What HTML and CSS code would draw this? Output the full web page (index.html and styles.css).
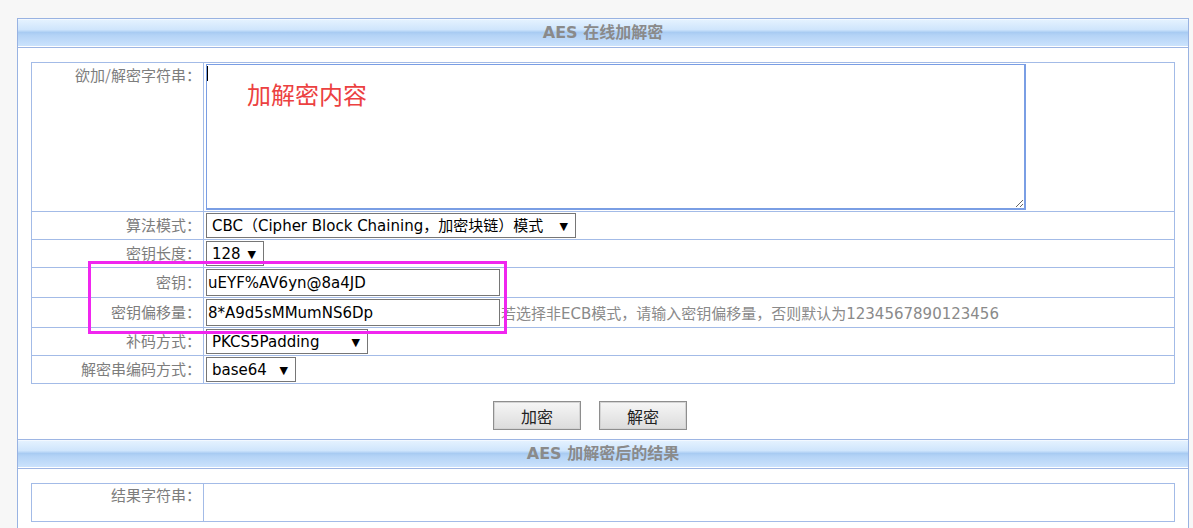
FILE: index.html
```html
<!DOCTYPE html>
<html lang="zh-CN">
<head>
    <meta charset="UTF-8">
    <title>AES 在线加解密</title>
    <link rel="stylesheet" href="styles.css">
</head>
<body>
    <div class="panel">
        <div class="panel-head">AES 在线加解密</div>
        <div class="panel-body">
            <table class="form-table">
                <tr class="row-text">
                    <th>欲加/解密字符串：</th>
                    <td>
                        <div class="text-wrap">
                            <textarea class="src-text"></textarea>
                            <span class="caret"></span>
                            <span class="note">加解密内容</span>
                        </div>
                    </td>
                </tr>
                <tr>
                    <th>算法模式：</th>
                    <td><div class="field"><span class="select-wrap"><select class="sel sel-mode"><option>CBC（Cipher Block Chaining，加密块链）模式</option></select></span></div></td>
                </tr>
                <tr>
                    <th>密钥长度：</th>
                    <td><div class="field"><span class="select-wrap"><select class="sel sel-len"><option>128</option></select></span></div></td>
                </tr>
                <tr>
                    <th>密钥：</th>
                    <td><div class="field"><input class="txt" type="text" value="uEYF%AV6yn@8a4JD"></div></td>
                </tr>
                <tr>
                    <th>密钥偏移量：</th>
                    <td><div class="field"><input class="txt" type="text" value="8*A9d5sMMumNS6Dp"><span class="hint">若选择非ECB模式，请输入密钥偏移量，否则默认为1234567890123456</span></div></td>
                </tr>
                <tr>
                    <th>补码方式：</th>
                    <td><div class="field"><span class="select-wrap"><select class="sel sel-pad"><option>PKCS5Padding</option></select></span></div></td>
                </tr>
                <tr>
                    <th>解密串编码方式：</th>
                    <td><div class="field"><span class="select-wrap"><select class="sel sel-enc"><option>base64</option></select></span></div></td>
                </tr>
            </table>
            <div class="actions">
                <button class="btn">加密</button>
                <button class="btn">解密</button>
            </div>
        </div>
        <div class="panel-head result-head">AES 加解密后的结果</div>
        <div class="panel-body">
            <table class="form-table">
                <tr class="row-result">
                    <th>结果字符串：</th>
                    <td></td>
                </tr>
            </table>
        </div>

        <!-- 标注框 -->
        <div class="highlight"></div>
    </div>
</body>
</html>
```
FILE: styles.css
```css
* {
    margin: 0;
    padding: 0;
    box-sizing: border-box;
}

body {
    background: #f7f7f7;
    font-family: "DejaVu Sans", "Noto Sans CJK SC", sans-serif;
    font-size: 15px;
    color: #000;
    text-spacing-trim: space-all;
}

.panel {
    position: relative;
    width: 1172px;
    margin: 18px 0 0 17px;
    background: #fff;
    border: 1px solid #99b3e2;
    padding-bottom: 40px;
}

.panel-head {
    height: 29px;
    line-height: 28px;
    text-align: center;
    font-size: 16px;
    font-weight: bold;
    color: #8a8a8a;
    background: linear-gradient(to bottom, #e6f3ff 0%, #cfe5fc 38%, #a8cbf2 48%, #b4d3f6 58%, #cde4fd 100%);
    border-bottom: 1px solid #9db5e3;
    box-shadow: inset 0 -1px 0 #fff, inset 0 1px 0 #f2f8ff;
}

.result-head {
    height: 30px;
    border-top: 1px solid #9db5e3;
}

.panel-body {
    padding: 14px 13px 0;
}

.form-table {
    width: 100%;
    border-collapse: collapse;
}

.form-table th,
.form-table td {
    border: 1px solid #a3bbe7;
    padding: 1px 2px;
}

.form-table th {
    width: 172px;
    text-align: right;
    vertical-align: middle;
    font-family: "Noto Sans CJK JP", "Noto Sans CJK SC", sans-serif;
    font-weight: normal;
    font-size: 15px;
    color: #7d7d7d;
    padding: 0 2px 3px 2px;
}

.row-text th {
    vertical-align: top;
    padding-top: 1px;
}

.row-result th {
    vertical-align: top;
    padding-top: 0;
}

.row-result td {
    height: 38px;
}

.field {
    display: flex;
    align-items: center;
}

.text-wrap {
    position: relative;
}

.src-text {
    display: block;
    width: 820px;
    height: 146px;
    border: 1px solid #7a9ee4;
    border-right-width: 2px;
    border-bottom-width: 2px;
    font-family: inherit;
    font-size: 15px;
    outline: none;
}

.caret {
    position: absolute;
    left: 1px;
    top: 2px;
    width: 1px;
    height: 15px;
    background: #000;
}

.note {
    position: absolute;
    left: 41px;
    top: 17px;
    font-family: "Noto Sans CJK SC", sans-serif;
    font-size: 24px;
    line-height: 26px;
    color: #ec4141;
}

.select-wrap {
    position: relative;
    display: inline-block;
}

.select-wrap::after {
    content: "▼";
    position: absolute;
    right: 8px;
    top: 50%;
    transform: translateY(-50%);
    font-size: 11px;
    color: #000;
    pointer-events: none;
}

.sel {
    display: block;
    appearance: none;
    -webkit-appearance: none;
    height: 25px;
    border: 1px solid #767676;
    border-radius: 0;
    background: #fff;
    padding: 0 0 0 5px;
    font-family: inherit;
    font-size: 15px;
    color: #000;
}

.sel-mode { width: 370px; }
.sel-len { width: 58px; }
.sel-pad { width: 162px; }
.sel-enc { width: 90px; }

.txt {
    width: 294px;
    height: 27px;
    border: 1px solid #767676;
    padding: 0 1px;
    font-family: inherit;
    font-size: 15px;
    color: #000;
}

.hint {
    margin-left: 1px;
    color: #8a8a8a;
    font-size: 15px;
}

.actions {
    display: flex;
    justify-content: center;
    gap: 18px;
    padding: 17px 26px 9px 0;
}

.btn {
    width: 88px;
    height: 29px;
    font-family: "Noto Sans CJK SC", sans-serif;
    font-size: 16px;
    color: #222;
    background: linear-gradient(to bottom, #f6f6f6, #dcdcdc);
    border: 1px solid #8e8e8e;
    box-shadow: inset 0 0 0 1px #d4d4d4;
    cursor: pointer;
}

.highlight {
    position: absolute;
    left: 70px;
    top: 242px;
    width: 419px;
    height: 73px;
    border: 3px solid #f026ef;
    pointer-events: none;
}
```
